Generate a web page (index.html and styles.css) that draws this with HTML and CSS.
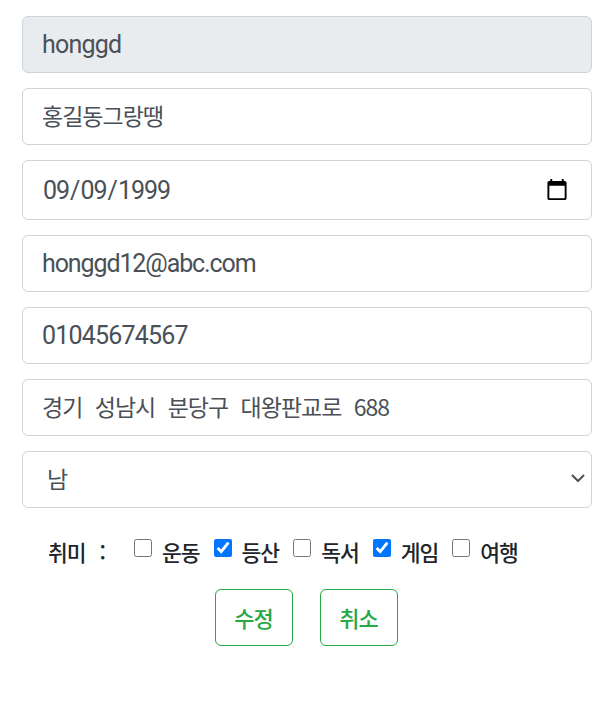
FILE: index.html
```html
<!DOCTYPE html>
<html lang="ko">
<head>
  <meta charset="UTF-8" />
  <title>회원정보 수정</title>
  <link rel="stylesheet" href="styles.css">
</head>
<body>

<form class="edit-form">
  <input class="field field-readonly" type="text" value="honggd" readonly />
  <input class="field field-ko" type="text" value="홍길동그랑땡" />
  <input class="field field-date" type="date" value="1999-09-09" />
  <input class="field field-email" type="email" value="honggd12@abc.com" />
  <input class="field" type="text" value="01045674567" />
  <input class="field field-ko" type="text" value="경기 성남시 분당구 대왕판교로 688" />
  <div class="select-wrap">
    <select class="field field-ko field-select">
      <option selected>남</option>
      <option>여</option>
    </select>
    <svg class="select-arrow" viewBox="0 0 16 16" width="16" height="16" aria-hidden="true">
      <path d="M2.5 5.5l5.5 5.5 5.5-5.5" fill="none" stroke="#495057" stroke-width="2" stroke-linecap="round" stroke-linejoin="round"/>
    </svg>
  </div>

  <div class="hobby-row">
    <span class="hobby-title">취미 :</span>
    <label class="hobby"><input type="checkbox" /> <span>운동</span></label>
    <label class="hobby"><input type="checkbox" checked /> <span>등산</span></label>
    <label class="hobby"><input type="checkbox" /> <span>독서</span></label>
    <label class="hobby"><input type="checkbox" checked /> <span>게임</span></label>
    <label class="hobby"><input type="checkbox" /> <span>여행</span></label>
  </div>

  <div class="buttons">
    <button type="submit" class="btn">수정</button>
    <button type="reset" class="btn">취소</button>
  </div>
</form>

</body>
</html>
```

FILE: styles.css
```css
* {
  box-sizing: border-box;
}

body {
  margin: 0;
  background: #fff;
  font-family: Roboto, "Noto Sans CJK KR", sans-serif;
  color: #212529;
}

.edit-form {
  display: flex;
  flex-direction: column;
  gap: 15px;
  padding: 16px 24px 0 22px;
}

.field {
  display: block;
  width: 100%;
  height: 57px;
  padding: 0 19px;
  font-family: inherit;
  font-size: 25px;
  letter-spacing: -0.8px;
  color: #495057;
  background: #fff;
  border: 1px solid #ced4da;
  border-radius: 6px;
  outline: none;
}

.field-ko {
  font-family: "Noto Sans CJK KR", sans-serif;
  font-size: 23px;
  letter-spacing: -1px;
  word-spacing: 7px;
  padding-bottom: 3px;
}

.field-readonly {
  background: #e9ecef;
}

.field-email {
  letter-spacing: -1.1px;
}

.field-date {
  height: 60px;
  padding-right: 22px;
  letter-spacing: -1px;
}

.field-date::-webkit-calendar-picker-indicator {
  width: 24px;
  height: 24px;
  padding: 0;
  margin: 0;
}

.select-wrap {
  position: relative;
}

.field-select {
  appearance: none;
  padding-left: 24px;
}

.select-arrow {
  position: absolute;
  right: 6px;
  top: 19px;
  pointer-events: none;
}

.hobby-row {
  display: flex;
  align-items: center;
  padding: 6px 0 0 26px;
  height: 50px;
  font-family: "Noto Sans CJK KR", sans-serif;
  font-size: 21.5px;
  font-weight: 500;
  letter-spacing: -1px;
  color: #212529;
}

.hobby-title {
  width: 86px;
  word-spacing: 9px;
}

.hobby {
  display: flex;
  align-items: center;
  gap: 10px;
  margin-right: 14px;
}

.hobby input {
  width: 18px;
  height: 18px;
  margin: 0 0 6px;
}

.buttons {
  display: flex;
  justify-content: center;
  gap: 27px;
  padding-right: 2px;
  margin-top: 1px;
}

.btn {
  width: 78px;
  height: 57px;
  padding: 0 0 2px;
  font-family: "Noto Sans CJK KR", sans-serif;
  font-size: 22px;
  font-weight: 500;
  letter-spacing: -1px;
  color: #28a745;
  background: #fff;
  border: 1px solid #28a745;
  border-radius: 6px;
}
```
